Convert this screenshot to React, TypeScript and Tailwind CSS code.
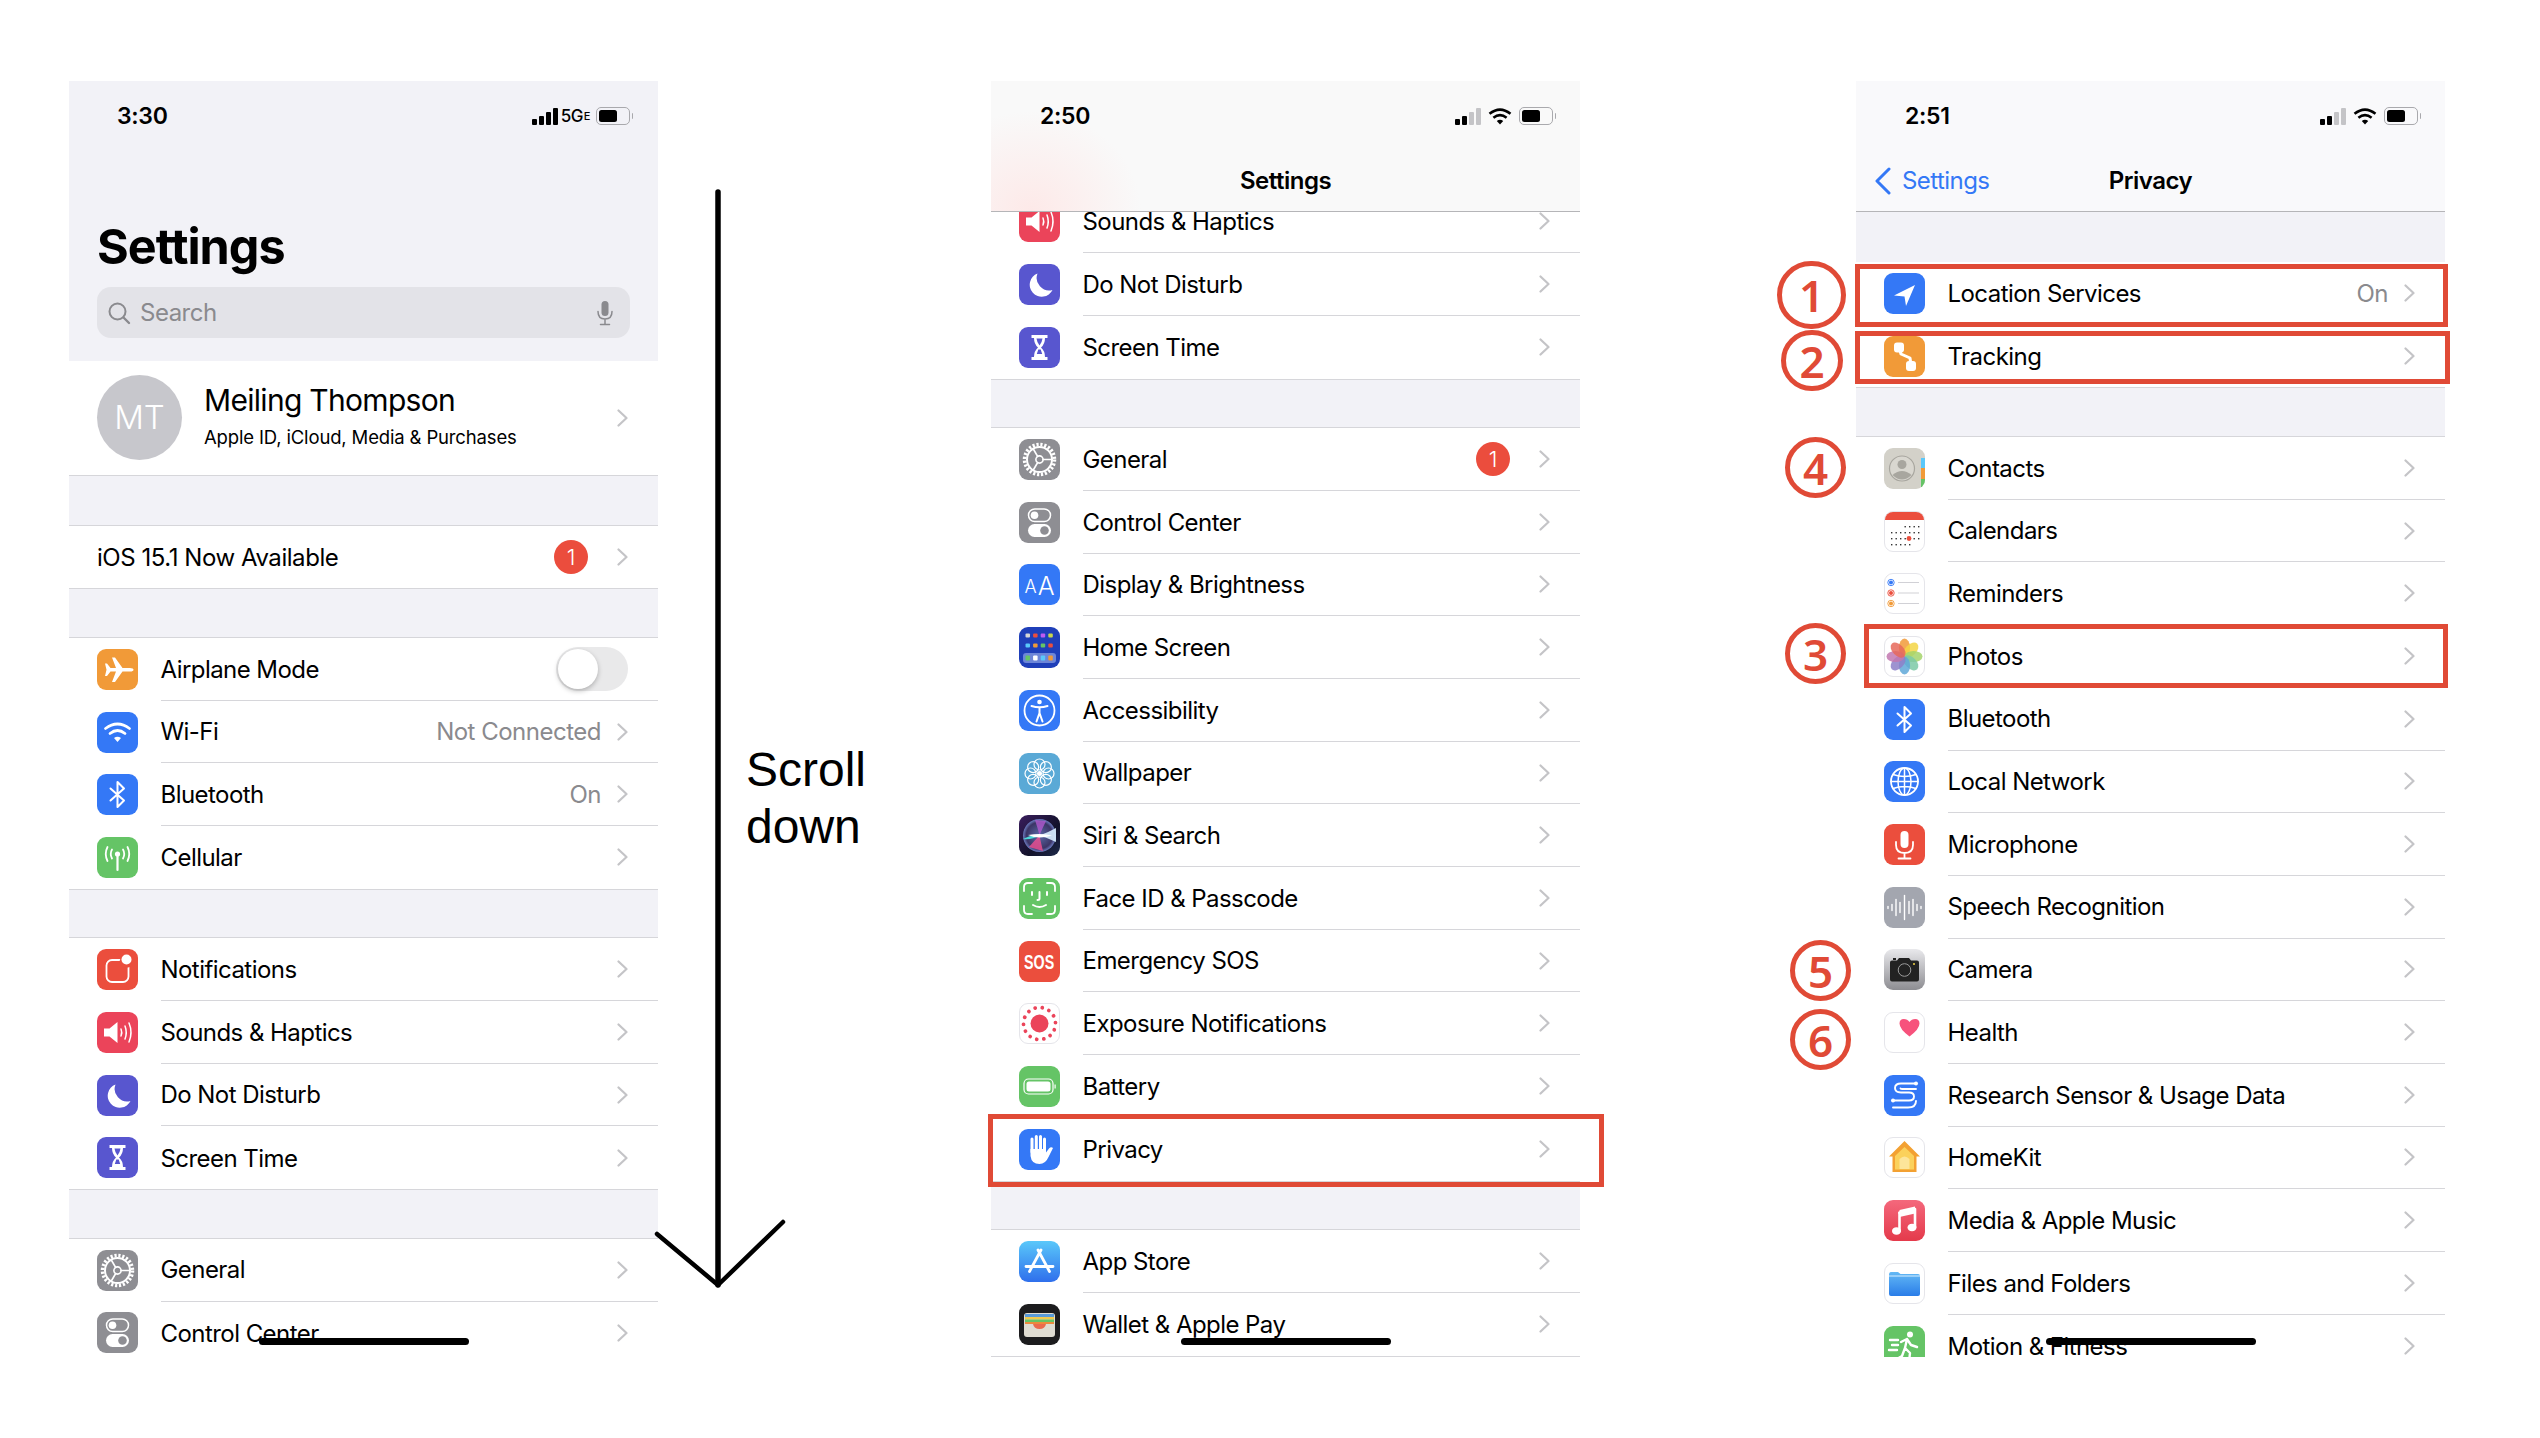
import React from "react";

const W = "#ffffff";
const line = { fill: "none", stroke: W, strokeLinecap: "round" as const, strokeLinejoin: "round" as const };

function Box({ bg, border, children }: { bg: string; border?: boolean; children: React.ReactNode }) {
  return (
    <div
      className={`h-[41px] w-[41px] shrink-0 overflow-hidden rounded-[9px] ${border ? "border border-[#e5e5ea]" : ""}`}
      style={{ background: bg }}
    >
      <div className={border ? "-m-px" : "h-full"}>{children}</div>
    </div>
  );
}

function S({ children }: { children: React.ReactNode }) {
  return (
    <svg viewBox="0 0 41 41" className="block h-[41px] w-[41px]">
      {children}
    </svg>
  );
}

const gear = (
  <S>
    <circle cx="20.5" cy="20.5" r="15" fill="none" stroke={W} strokeWidth="3.5" strokeDasharray="2.2 1.75" />
    <circle cx="20.5" cy="20.5" r="12.5" fill="none" stroke={W} strokeWidth="2" />
    <circle cx="20.5" cy="20.5" r="3.6" fill="none" stroke={W} strokeWidth="1.6" />
    <path d="M24 20.5h8.500M18.700 17.500L14 9.500M18.700 23.500L14 31.500" {...line} strokeWidth="1.6" />
  </S>
);

const icons: Record<string, React.ReactNode> = {
  airplane: (
    <Box bg="#f19a38">
      <S>
        <path d="M8 14.5h2L13.5 19H19L15 8.5h3L25.5 19H33q3.5 0 3.5 1.8T33 22.6H25.5L18 33h-3l4-10.4H13.5L10 27H8l1.5-6.2z" fill={W} />
      </S>
    </Box>
  ),
  wifi: (
    <Box bg="#3478f6">
      <S>
        <path d="M8.5 16.500Q20.500 7.500 32.500 16.500M13 21.500Q20.500 15.500 28 21.500" {...line} strokeWidth="2.8" />
        <path d="M17 26L20.500 30 24 26Q20.500 23.500 17 26z" fill={W} />
      </S>
    </Box>
  ),
  bluetooth: (
    <Box bg="#3478f6">
      <S>
        <path d="M13.500 14.500L27 26.500 20.500 33V8L27 14.500 13.500 26.500" {...line} strokeWidth="2" />
      </S>
    </Box>
  ),
  cellular: (
    <Box bg="#65c466">
      <S>
        <circle cx="20.500" cy="17" r="2.6" fill={W} />
        <path d="M20.500 19V33" {...line} strokeWidth="2.2" />
        <path d="M15 12.500Q12.500 17 15 21.500M26 12.500Q28.500 17 26 21.500M10.500 10Q7 17 10.500 24M30.500 10Q34 17 30.500 24" {...line} strokeWidth="1.8" />
      </S>
    </Box>
  ),
  notifications: (
    <Box bg="#eb4e3d">
      <S>
        <rect x="9.500" y="11" width="22" height="22" rx="5.500" fill="none" stroke={W} strokeWidth="1.8" />
        <circle cx="29.500" cy="12" r="6.8" fill="#eb4e3d" />
        <circle cx="29.500" cy="10.500" r="5" fill={W} />
      </S>
    </Box>
  ),
  sounds: (
    <Box bg="#eb445a">
      <S>
        <path d="M7 16.500h5.500L20.500 10V31l-8-6.500H7z" fill={W} />
        <path d="M24 17Q25.500 20.500 24 24M28 14Q30.500 20.500 28 27M32 11Q36 20.500 32 30" {...line} strokeWidth="1.5" />
      </S>
    </Box>
  ),
  moon: (
    <Box bg="#5856cf">
      <S>
        <path d="M18.500 9.500A12 12 0 1 0 33.500 26 12.500 12.500 0 0 1 18.500 9.500z" fill={W} />
      </S>
    </Box>
  ),
  hourglass: (
    <Box bg="#5856cf">
      <S>
        <path d="M12.500 8h16v3h-16zM12.500 30h16v3h-16z" fill={W} />
        <path d="M15 11H26Q26 17 22 20.500 26 24 26 30H15Q15 24 19 20.500 15 17 15 11z" fill={W} />
        <path d="M17.500 11.500h6q-.5 4-3 7-2.500-3-3-7zM17.800 27h5.400l-1.500-4.500h-2.400z" fill="#5856cf" />
      </S>
    </Box>
  ),
  general: <Box bg="#8e8e93">{gear}</Box>,
  control: (
    <Box bg="#8e8e93">
      <S>
        <rect x="9.500" y="7" width="22" height="12.500" rx="6.250" fill="none" stroke={W} strokeWidth="1.5" />
        <circle cx="15.500" cy="13.200" r="3.8" fill={W} />
        <rect x="9" y="22" width="23" height="13" rx="6.500" fill={W} />
        <circle cx="25.500" cy="28.500" r="4.3" fill="#8e8e93" />
      </S>
    </Box>
  ),
  display: (
    <Box bg="#3478f6">
      <div className="flex h-full items-end justify-center gap-[1px] pb-[9px] font-light leading-none text-white">
        <span className="text-[18px] leading-[18px]">A</span>
        <span className="text-[25px] leading-[20px]">A</span>
      </div>
    </Box>
  ),
  home: (
    <Box bg="#1f3fb9">
      <S>
        {["#d7d7d7", "#eb4e3d", "#bf5af2", "#c9d64b"].map((c, i) => (
          <rect key={c} x={6.5 + i * 7.6} y="6.500" width="4.500" height="4" rx="1" fill={c} />
        ))}
        {["#5ac8fa", "#f19a38", "#65c466", "#eb4e3d"].map((c, i) => (
          <rect key={c} x={6.5 + i * 7.6} y="16.500" width="4.500" height="4" rx="1" fill={c} />
        ))}
        <rect x="4" y="26" width="33" height="10" rx="3" fill="#6d86d8" />
        {["#65c466", "#ffffff", "#5ac8fa", "#f19a38"].map((c, i) => (
          <rect key={c} x={6.5 + i * 7.6} y="28.500" width="4.500" height="5" rx="1" fill={c} />
        ))}
      </S>
    </Box>
  ),
  access: (
    <Box bg="#3478f6">
      <S>
        <circle cx="20.500" cy="20.500" r="15" fill="none" stroke={W} strokeWidth="1.8" />
        <circle cx="20.500" cy="12" r="2.3" fill={W} />
        <path d="M12.500 16q8 2.500 16 0M20.500 17.500V23M20.500 23l-3 8.500M20.500 23l3 8.500" {...line} strokeWidth="2" />
      </S>
    </Box>
  ),
  wallpaper: (
    <Box bg="#5aa9d6">
      <S>
        {[0, 45, 90, 135, 180, 225, 270, 315].map((a) => (
          <circle key={a} cx="20.500" cy="11.500" r="5.5" fill="none" stroke={W} strokeWidth="1.2" transform={`rotate(${a} 20.500 20.500)`} />
        ))}
        <circle cx="20.500" cy="20.500" r="2.5" fill={W} />
      </S>
    </Box>
  ),
  siri: (
    <Box bg="linear-gradient(135deg,#3a1d5e,#12122a 60%,#1d2a4a)">
      <S>
        <defs>
          <radialGradient id="sr">
            <stop offset="0" stopColor="#5a6aa8" />
            <stop offset="0.8" stopColor="#3c3566" />
            <stop offset="1" stopColor="#6c7cc0" />
          </radialGradient>
        </defs>
        <circle cx="20.500" cy="20.500" r="16.5" fill="url(#sr)" />
        <path d="M16 5Q19 14 20.500 20.500 24 12 27 6z" fill="#b05ad0" fillOpacity="0.8" />
        <path d="M10 32Q16 25 20.500 20.500 22 28 24 36z" fill="#e84f90" fillOpacity="0.85" />
        <path d="M4 24Q13 19 20.500 20.500 13 25 4 24z" fill="#4fd8d8" />
        <path d="M37 13Q28 18 20.500 20.500 29 23 37 27z" fill="#d8f0ff" fillOpacity="0.9" />
        <path d="M9 20Q15 19 20.500 19 27 19 33 20.500 27 22.500 20.500 22.500 15 22.500 9 20z" fill="#ffffff" />
      </S>
    </Box>
  ),
  face: (
    <Box bg="#65c466">
      <S>
        <path d="M5 13V9q0-4 4-4h4M28 5h4q4 0 4 4v4M36 28v4q0 4-4 4h-4M13 36H9q-4 0-4-4v-4" {...line} strokeWidth="1.8" />
        <path d="M13 14v3M28 14v3M20.500 14v6.500q0 1.500-2 1.500M14 27q6.500 4 13 0" {...line} strokeWidth="2" />
      </S>
    </Box>
  ),
  sos: (
    <Box bg="#eb4e3d">
      <div className="flex h-full items-center justify-center [font-family:'Liberation_Sans',sans-serif] text-[21px] font-bold leading-none text-white">
        <span className="inline-block scale-x-[0.68]">SOS</span>
      </div>
    </Box>
  ),
  exposure: (
    <Box bg="#ffffff" border>
      <S>
        <circle cx="20.500" cy="20.500" r="9" fill="#eb445a" />
        {Array.from({ length: 14 }).map((_, i) => (
          <circle key={i} cx="20.500" cy="4.500" r="1.9" fill="#eb445a" transform={`rotate(${(i * 360) / 14 + 10} 20.500 20.500)`} />
        ))}
      </S>
    </Box>
  ),
  battery: (
    <Box bg="#65c466">
      <S>
        <rect x="5" y="13" width="29" height="15" rx="4.5" fill="none" stroke={W} strokeWidth="1.2" />
        <rect x="7.500" y="15.500" width="24" height="10" rx="2.5" fill={W} />
        <rect x="35.500" y="18.500" width="1.2" height="4" fill={W} />
      </S>
    </Box>
  ),
  privacy: (
    <Box bg="#3478f6">
      <S>
        <path d="M13 10v13M17.300 7.500V22M21.500 7.500V22M25.500 10v13" {...line} strokeWidth="3" />
        <path d="M11.500 17V27q1 8 9 8 6 0 9-7l4.500-9q-2-1.500-4 .5L27 23.500V20H11.500z" fill={W} />
      </S>
    </Box>
  ),
  appstore: (
    <Box bg="linear-gradient(180deg,#5ac8fa,#2f6fec)">
      <S>
        <path d="M22 9L10.500 30.500M19 9L30.500 30.500M7 25.500H34" {...line} strokeWidth="2.8" />
      </S>
    </Box>
  ),
  wallet: (
    <Box bg="#1c1c1e">
      <S>
        <rect x="5" y="9" width="31" height="24" rx="3" fill="#dfdcd2" />
        <rect x="6" y="10" width="29" height="3" fill="#5a9bd8" />
        <rect x="6" y="13" width="29" height="2.5" fill="#f2c94c" />
        <rect x="6" y="15.500" width="29" height="2.5" fill="#65c466" />
        <rect x="6" y="18" width="29" height="2" fill="#eb8a3d" />
        <path d="M14 20h13q-1 5-6.500 5T14 20z" fill="#eb6a4d" />
      </S>
    </Box>
  ),
  location: (
    <Box bg="#3478f6">
      <S>
        <path d="M10 22.500L31 12 22 33 20.500 23.500z" fill={W} />
      </S>
    </Box>
  ),
  tracking: (
    <Box bg="#f19a38">
      <S>
        <path d="M15 11l2 7 9 4 1 7" {...line} strokeWidth="3" />
        <rect x="10" y="6.500" width="10" height="10" rx="3" fill={W} />
        <rect x="22" y="25" width="10" height="10" rx="3" fill={W} />
      </S>
    </Box>
  ),
  contacts: (
    <Box bg="#d3d1c9">
      <S>
        <rect x="37" y="10" width="4" height="10" fill="#5ac8fa" />
        <rect x="37" y="20" width="4" height="11" fill="#f19a38" />
        <rect x="37" y="31" width="4" height="10" fill="#65c466" />
        <circle cx="18" cy="20.500" r="12.5" fill="#d9d7d0" stroke="#a8a69f" strokeWidth="1.2" />
        <circle cx="18" cy="16.500" r="4.5" fill="#a8a69f" />
        <path d="M8.500 27q9.500-8 19 0-9.500 9-19 0z" fill="#a8a69f" />
      </S>
    </Box>
  ),
  calendars: (
    <Box bg="#ffffff" border>
      <S>
        <rect x="0" y="0" width="41" height="9" fill="#eb4e3d" />
        {[15, 21, 27, 33].map((y, r) =>
          [7, 11.5, 16, 20.5, 25, 29.5, 34].map((x, c) =>
            (r === 0 && c < 3) || (r === 3 && c > 4) ? null : (
              <rect key={`${x}-${y}`} x={x} y={y} width="1.4" height="1.4" fill="#333" />
            )
          )
        )}
        <circle cx="25" cy="27.500" r="2.4" fill="#eb4e3d" />
      </S>
    </Box>
  ),
  reminders: (
    <Box bg="#ffffff" border>
      <S>
        {[
          [9.5, "#3478f6"],
          [20, "#eb4e3d"],
          [30.5, "#f19a38"],
        ].map(([y, c]) => (
          <g key={String(c)}>
            <circle cx="7" cy={y as number} r="3.2" fill="none" stroke={c as string} strokeWidth="0.9" />
            <circle cx="7" cy={y as number} r="2" fill={c as string} />
            <rect x="14" y={(y as number) - 0.5} width="21" height="1" fill="#d1d1d6" />
          </g>
        ))}
      </S>
    </Box>
  ),
  photos: (
    <Box bg="#ffffff" border>
      <S>
        {["#f19a38", "#f3d544", "#a5d36b", "#7cc9a6", "#5fa8d8", "#8d80c8", "#c278b0", "#e6695a"].map((c, i) => (
          <ellipse key={c} cx="20.500" cy="11.500" rx="5.6" ry="9" fill={c} fillOpacity="0.85" transform={`rotate(${i * 45} 20.500 20.500)`} />
        ))}
      </S>
    </Box>
  ),
  network: (
    <Box bg="#3478f6">
      <S>
        <circle cx="20.500" cy="20.500" r="13.5" fill="none" stroke={W} strokeWidth="1.8" />
        <ellipse cx="20.500" cy="20.500" rx="6.5" ry="13.5" fill="none" stroke={W} strokeWidth="1.5" />
        <path d="M20.500 7v27M7 20.500h27M9 13.500q11.500 4 23 0M9 27.500q11.500-4 23 0" {...line} strokeWidth="1.5" />
      </S>
    </Box>
  ),
  mic: (
    <Box bg="#eb4e3d">
      <S>
        <rect x="16.500" y="7" width="8" height="17" rx="4" fill={W} />
        <path d="M12 18v3q0 8 8.500 8T29 21v-3M20.500 29v5M14.500 34.500h12" {...line} strokeWidth="1.8" />
      </S>
    </Box>
  ),
  speech: (
    <Box bg="#a3a6af">
      <S>
        {[
          [4, 1],
          [8, 3],
          [12, 8],
          [16, 5],
          [20.5, 12],
          [25, 6],
          [29, 8],
          [33, 3],
          [37, 1],
        ].map(([x, h]) => (
          <path key={x} d={`M${x} ${20.5 - h}V${20.5 + h}`} {...line} strokeWidth="1.4" />
        ))}
      </S>
    </Box>
  ),
  camera: (
    <Box bg="linear-gradient(180deg,#e9e9ec,#8d8d92)">
      <S>
        <path d="M6 13.500q0-2 2-2h5l2-2.500h10l2 2.500h6q2 0 2 2v17q0 2-2 2H8q-2 0-2-2z" fill="#222" />
        <rect x="9" y="9" width="3" height="2" fill="#222" />
        <circle cx="20.500" cy="21" r="6.3" fill="none" stroke="#9a9a9a" strokeWidth="1" />
        <circle cx="30" cy="15" r="1" fill="#f3d544" />
      </S>
    </Box>
  ),
  health: (
    <Box bg="#ffffff" border>
      <S>
        <path d="M25.500 24.500Q15.500 17 15.500 11.500 15.500 7 19.800 7 23.500 7 25.500 10 27.500 7 31.200 7 35.500 7 35.500 11.500 35.500 17 25.500 24.500z" fill="#f7527c" />
      </S>
    </Box>
  ),
  research: (
    <Box bg="#3478f6">
      <S>
        <path d="M32 8.500H17q-6 0-6 4.500t6 4.500h8q5 0 5 4t-5 4H9" {...line} strokeWidth="1.9" />
        <path d="M32 14H18q-1.500 0-1.500-.5M9 32.500h15q8 0 8-6.500" {...line} strokeWidth="1.9" />
        <circle cx="9" cy="25.500" r="2" fill={W} />
        <circle cx="32" cy="8.500" r="2" fill={W} />
      </S>
    </Box>
  ),
  homekit: (
    <Box bg="#ffffff" border>
      <S>
        <path d="M20.500 4L36 19.500h-3.500V35h-24V19.500H5z" fill="#f3a132" />
        <path d="M11 19L20.500 10l9.500 9V32.500H11z" fill="#fbd15b" />
        <path d="M15.500 22q5-5 10 0v10h-10z" fill="#fde59a" />
      </S>
    </Box>
  ),
  music: (
    <Box bg="linear-gradient(180deg,#f4687c,#e43a4b)">
      <S>
        <path d="M15.500 13L31 9V27" {...line} strokeWidth="2.6" />
        <path d="M15.500 12.500V31" {...line} strokeWidth="2.6" />
        <path d="M15.500 10L31 6.500v7L15.500 17z" fill={W} />
        <ellipse cx="12.500" cy="31" rx="4.5" ry="3.8" fill={W} />
        <ellipse cx="28" cy="27.500" rx="4.5" ry="3.8" fill={W} />
      </S>
    </Box>
  ),
  files: (
    <Box bg="#ffffff" border>
      <S>
        <defs>
          <linearGradient id="fo" x1="0" y1="0" x2="0" y2="1">
            <stop offset="0" stopColor="#63b9f5" />
            <stop offset="1" stopColor="#2a7de8" />
          </linearGradient>
        </defs>
        <path d="M5 12q0-3 2-3h7l2.500 2H34q2 0 2 2v18q0 2-2 2H7q-2 0-2-2z" fill="url(#fo)" />
        <rect x="5" y="12.500" width="31" height="1" fill="#d8efff" />
      </S>
    </Box>
  ),
  motion: (
    <Box bg="#65c466">
      <S>
        <circle cx="26" cy="8.500" r="3" fill={W} />
        <path d="M17 16l6-3 4 6 6 2M23 13l-2 9 5 5-1 9M21 22l-3 8-5 3M6 14h8M8 19h6M5 24h8" {...line} strokeWidth="2.4" />
      </S>
    </Box>
  ),
};

function Chevron() {
  return (
    <svg viewBox="0 0 11 18" className="h-[18px] w-[11px] shrink-0">
      <path d="M1.500 1.500L9.500 9l-8 7.500" fill="none" stroke="#c4c4c7" strokeWidth="2.2" strokeLinecap="round" strokeLinejoin="round" />
    </svg>
  );
}

function Badge({ className = "" }: { className?: string }) {
  return (
    <div className={`flex h-[34px] w-[34px] items-center justify-center rounded-full bg-[#eb4d3d] text-[22px] font-light leading-none text-white ${className}`}>
      1
    </div>
  );
}

type RowT = { icon: string; label: string; value?: string; badge?: boolean; toggle?: boolean };

function Row({ row, last }: { row: RowT; last?: boolean }) {
  return (
    <div className="flex h-[62.7px] items-center bg-white pl-[28px]">
      {icons[row.icon]}
      <div className={`ml-[22.5px] flex h-full min-w-0 flex-1 items-center pr-[30px] ${last ? "" : "border-b border-[#d6d6da]"}`}>
        <span className="flex-1 pt-[1.5px] text-[24px] tracking-[-0.55px] text-black">{row.label}</span>
        {row.toggle ? (
          <div className="flex h-[44px] w-[72px] items-center rounded-full bg-[#e9e9ea] pl-[2px]">
            <div className="h-[40px] w-[40px] rounded-full bg-white shadow-[0_2px_5px_rgba(0,0,0,0.25)]" />
          </div>
        ) : (
          <>
            {row.value && <span className="mr-[16px] pt-[1.5px] text-[24px] tracking-[-0.5px] text-[#8a8a8e]">{row.value}</span>}
            {row.badge && <Badge className="mr-[29px]" />}
            <Chevron />
          </>
        )}
      </div>
    </div>
  );
}

function Group({ rows }: { rows: RowT[] }) {
  return (
    <div>
      {rows.map((r, i) => (
        <Row key={r.label} row={r} last={i === rows.length - 1} />
      ))}
    </div>
  );
}

function Gap() {
  return <div className="h-[49.7px] border-y border-[#d6d6da] bg-[#f2f2f7]" />;
}

function Signal({ full }: { full?: boolean }) {
  return (
    <div className="flex items-end gap-[2px]">
      {[6, 9, 13, 17].map((h, i) => (
        <div
          key={h}
          className={`w-[5px] rounded-[1px] ${full || i < 2 ? "bg-black" : "bg-[#c4c4c7]"}`}
          style={{ height: h }}
        />
      ))}
    </div>
  );
}

function Battery() {
  return (
    <div className="flex items-center">
      <div className="flex h-[18px] w-[34px] items-center rounded-[5px] border border-[#a9a9ad] p-[2px]">
        <div className="h-full w-[18px] rounded-[2.5px] bg-black" />
      </div>
      <div className="ml-[2px] h-[6px] w-[1.5px] rounded-r bg-[#a9a9ad]" />
    </div>
  );
}

function Wifi() {
  return (
    <svg viewBox="0 0 24 17" className="h-[17px] w-[24px]">
      <path d="M1.500 5.800Q12-2.700 22.500 5.800M5.400 9.800Q12 4.500 18.600 9.800" fill="none" stroke="#000" strokeWidth="2.6" />
      <path d="M8.800 13L12 16.500 15.200 13Q12 10.400 8.800 13z" fill="#000" />
    </svg>
  );
}

function StatusBar({ time, children }: { time: string; children: React.ReactNode }) {
  return (
    <div className="flex h-[70px] items-center justify-between pl-[49px] pr-[24px]">
      <span className="text-[23px] font-semibold tracking-[-0.3px] text-black">{time}</span>
      <div className="flex items-center gap-[7px]">{children}</div>
    </div>
  );
}

function NavHeader({ time, title, back, tint }: { time: string; title: string; back?: boolean; tint?: boolean }) {
  return (
    <div
      className={`relative z-10 h-[131px] border-b border-[#b5b5b8] ${
        tint ? "bg-[radial-gradient(ellipse_110px_100px_at_40px_100%,#fde9e8_0%,#f9f9f9_100%)]" : "bg-[#f9f9fb]"
      }`}
    >
      <StatusBar time={time}>
        <Signal />
        <Wifi />
        <Battery />
      </StatusBar>
      <div className="relative flex h-[60px] items-center justify-center pb-[1px]">
        {back && (
          <div className="absolute left-[18px] top-0 flex h-full items-center gap-[10px] text-[#3478f6]">
            <svg viewBox="0 0 18 28" className="h-[28px] w-[18px]">
              <path d="M15 2L3 14l12 12" fill="none" stroke="#3478f6" strokeWidth="3" strokeLinecap="round" strokeLinejoin="round" />
            </svg>
            <span className="text-[24px] tracking-[-0.55px]">Settings</span>
          </div>
        )}
        <span className="text-[24px] font-semibold tracking-[-0.5px] text-black">{title}</span>
      </div>
    </div>
  );
}

function HomeBar() {
  return <div className="absolute bottom-[12px] left-1/2 h-[7px] w-[210px] -translate-x-1/2 rounded-full bg-black" />;
}

function Frame({ className }: { className: string }) {
  return <div className={`pointer-events-none absolute z-20 border-[5px] border-[#e04a36] ${className}`} />;
}

function Mark({ n, className }: { n: string; className: string }) {
  return (
    <div className={`absolute flex items-center justify-center rounded-full border-[5px] border-[#e04a36] [font-family:'Noto_Sans',sans-serif] text-[44px] font-semibold leading-none text-[#e04a36] ${className}`}>
      {n}
    </div>
  );
}

const P1A: RowT[] = [
  { icon: "airplane", label: "Airplane Mode", toggle: true },
  { icon: "wifi", label: "Wi-Fi", value: "Not Connected" },
  { icon: "bluetooth", label: "Bluetooth", value: "On" },
  { icon: "cellular", label: "Cellular" },
];
const P1B: RowT[] = [
  { icon: "notifications", label: "Notifications" },
  { icon: "sounds", label: "Sounds & Haptics" },
  { icon: "moon", label: "Do Not Disturb" },
  { icon: "hourglass", label: "Screen Time" },
];
const P1C: RowT[] = [
  { icon: "general", label: "General" },
  { icon: "control", label: "Control Center" },
];
const P2A: RowT[] = [
  { icon: "sounds", label: "Sounds & Haptics" },
  { icon: "moon", label: "Do Not Disturb" },
  { icon: "hourglass", label: "Screen Time" },
];
const P2B: RowT[] = [
  { icon: "general", label: "General", badge: true },
  { icon: "control", label: "Control Center" },
  { icon: "display", label: "Display & Brightness" },
  { icon: "home", label: "Home Screen" },
  { icon: "access", label: "Accessibility" },
  { icon: "wallpaper", label: "Wallpaper" },
  { icon: "siri", label: "Siri & Search" },
  { icon: "face", label: "Face ID & Passcode" },
  { icon: "sos", label: "Emergency SOS" },
  { icon: "exposure", label: "Exposure Notifications" },
  { icon: "battery", label: "Battery" },
  { icon: "privacy", label: "Privacy" },
];
const P2C: RowT[] = [
  { icon: "appstore", label: "App Store" },
  { icon: "wallet", label: "Wallet & Apple Pay" },
];
const P3A: RowT[] = [
  { icon: "location", label: "Location Services", value: "On" },
  { icon: "tracking", label: "Tracking" },
];
const P3B: RowT[] = [
  { icon: "contacts", label: "Contacts" },
  { icon: "calendars", label: "Calendars" },
  { icon: "reminders", label: "Reminders" },
  { icon: "photos", label: "Photos" },
  { icon: "bluetooth", label: "Bluetooth" },
  { icon: "network", label: "Local Network" },
  { icon: "mic", label: "Microphone" },
  { icon: "speech", label: "Speech Recognition" },
  { icon: "camera", label: "Camera" },
  { icon: "health", label: "Health" },
  { icon: "research", label: "Research Sensor & Usage Data" },
  { icon: "homekit", label: "HomeKit" },
  { icon: "music", label: "Media & Apple Music" },
  { icon: "files", label: "Files and Folders" },
  { icon: "motion", label: "Motion & Fitness" },
];

function PhoneOne() {
  return (
    <div className="relative h-[1276px] w-[589px] shrink-0 overflow-hidden bg-white">
      <div className="h-[280px] bg-[#f2f2f7]">
        <div className="flex h-[70px] items-center justify-between pl-[48px] pr-[25px]">
          <span className="text-[23px] font-semibold tracking-[-0.3px] text-black">3:30</span>
          <div className="flex items-center">
            <Signal full />
            <span className="ml-[3px] text-[17px] font-medium leading-none tracking-[-0.5px] text-black">5G</span>
            <span className="ml-[1px] mr-[5px] text-[11px] font-medium leading-none text-black">E</span>
            <Battery />
          </div>
        </div>
        <div className="pl-[28px] pt-[66px] text-[48.5px] font-bold leading-[60px] tracking-[-1px] text-black">Settings</div>
        <div className="mx-[28px] mt-[10px] flex h-[51px] items-center rounded-[14px] bg-[#e3e3e8] pl-[10px] pr-[16px]">
          <svg viewBox="0 0 24 24" className="mr-[9px] h-[24px] w-[24px]">
            <circle cx="10.500" cy="10.500" r="8" fill="none" stroke="#8a8a8e" strokeWidth="2" />
            <path d="M16.500 16.500L22 22" stroke="#8a8a8e" strokeWidth="2.4" strokeLinecap="round" />
          </svg>
          <span className="flex-1 text-[24px] tracking-[-0.5px] text-[#8a8a8e]">Search</span>
          <svg viewBox="0 0 18 26" className="h-[26px] w-[18px]">
            <rect x="5.500" y="1" width="7" height="15" rx="3.5" fill="#8a8a8e" />
            <path d="M2 11.500q0 7.500 7 7.500t7-7.500M9 19v5M4.500 24.500h9" fill="none" stroke="#8a8a8e" strokeWidth="1.5" strokeLinecap="round" />
          </svg>
        </div>
      </div>

      <div className="flex h-[114.6px] items-center border-b border-[#d6d6da] bg-white pl-[28px] pr-[30px]">
        <div className="flex h-[85px] w-[85px] shrink-0 items-center justify-center rounded-full bg-[#c7c7cc] text-[33px] font-light text-white">MT</div>
        <div className="ml-[22px] flex flex-1 flex-col justify-center pb-[6px]">
          <span className="text-[30px] leading-[38px] tracking-[-0.7px] text-black">Meiling Thompson</span>
          <span className="mt-[6px] text-[18.5px] leading-[24px] tracking-[-0.15px] text-black">Apple ID, iCloud, Media &amp; Purchases</span>
        </div>
        <Chevron />
      </div>
      <div className="h-[50px] border-b border-[#d6d6da] bg-[#f2f2f7]" />
      <div className="flex h-[62.7px] items-center bg-white pl-[28px] pr-[30px]">
        <span className="flex-1 pt-[1.5px] text-[24px] tracking-[-0.45px] text-black">iOS 15.1 Now Available</span>
        <Badge className="mr-[29px]" />
        <Chevron />
      </div>
      <Gap />
      <Group rows={P1A} />
      <Gap />
      <Group rows={P1B} />
      <Gap />
      <Group rows={P1C} />
      <HomeBar />
    </div>
  );
}

function PhoneTwo() {
  return (
    <div className="relative h-[1276px] w-[589px] shrink-0 bg-white">
      <div className="h-full overflow-hidden">
        <NavHeader time="2:50" title="Settings" tint />
        <div className="-mt-[21.5px]">
          <Group rows={P2A} />
          <Gap />
          <Group rows={P2B} />
          <Gap />
          <Group rows={P2C} />
          <div className="h-[1px] bg-[#d6d6da]" />
        </div>
      </div>
      <HomeBar />
      <Frame className="-left-[3px] top-[1033px] h-[73px] w-[616px]" />
    </div>
  );
}

function PhoneThree() {
  return (
    <div className="relative h-[1276px] w-[589px] shrink-0 bg-white">
      <div className="h-full overflow-hidden">
        <NavHeader time="2:51" title="Privacy" back />
        <div className="h-[50px] bg-[#f2f2f7]" />
        <Group rows={P3A} />
        <Gap />
        <Group rows={P3B} />
      </div>
      <HomeBar />
      <Frame className="-left-[1px] top-[183px] h-[63px] w-[593px]" />
      <Frame className="-left-[1px] top-[249.5px] h-[53px] w-[595px]" />
      <Frame className="left-[8px] top-[542.5px] h-[64px] w-[584px]" />
      <Mark n="1" className="-left-[79px] top-[180px] h-[68px] w-[69px]" />
      <Mark n="2" className="-left-[75px] top-[249px] h-[61px] w-[62px]" />
      <Mark n="4" className="-left-[71px] top-[356px] h-[61px] w-[61px]" />
      <Mark n="3" className="-left-[71px] top-[542px] h-[61px] w-[61px]" />
      <Mark n="5" className="-left-[66px] top-[859px] h-[61px] w-[61px]" />
      <Mark n="6" className="-left-[66px] top-[928px] h-[61px] w-[61px]" />
    </div>
  );
}

export default function App() {
  return (
    <div className="h-[1438px] w-[2540px] overflow-hidden bg-white pl-[69px] pt-[81px] [font-family:Inter,sans-serif]">
      <div className="flex">
        <PhoneOne />
        <div className="relative w-[333px] shrink-0 pl-[88px] pt-[660px] [font-family:'Liberation_Sans',sans-serif] text-[48px] leading-[57px] text-black">
          <div>Scroll</div>
          <div>down</div>
          <svg className="absolute left-0 top-0 z-20 overflow-visible" width="333" height="1276" viewBox="0 0 333 1276">
            <path d="M60 111V1204" stroke="#000" strokeWidth="5.500" strokeLinecap="round" fill="none" />
            <path d="M-1 1153L60 1204 125 1141" stroke="#000" strokeWidth="4.500" strokeLinecap="round" strokeLinejoin="round" fill="none" />
          </svg>
        </div>
        <PhoneTwo />
        <div className="w-[276px] shrink-0" />
        <PhoneThree />
      </div>
    </div>
  );
}
